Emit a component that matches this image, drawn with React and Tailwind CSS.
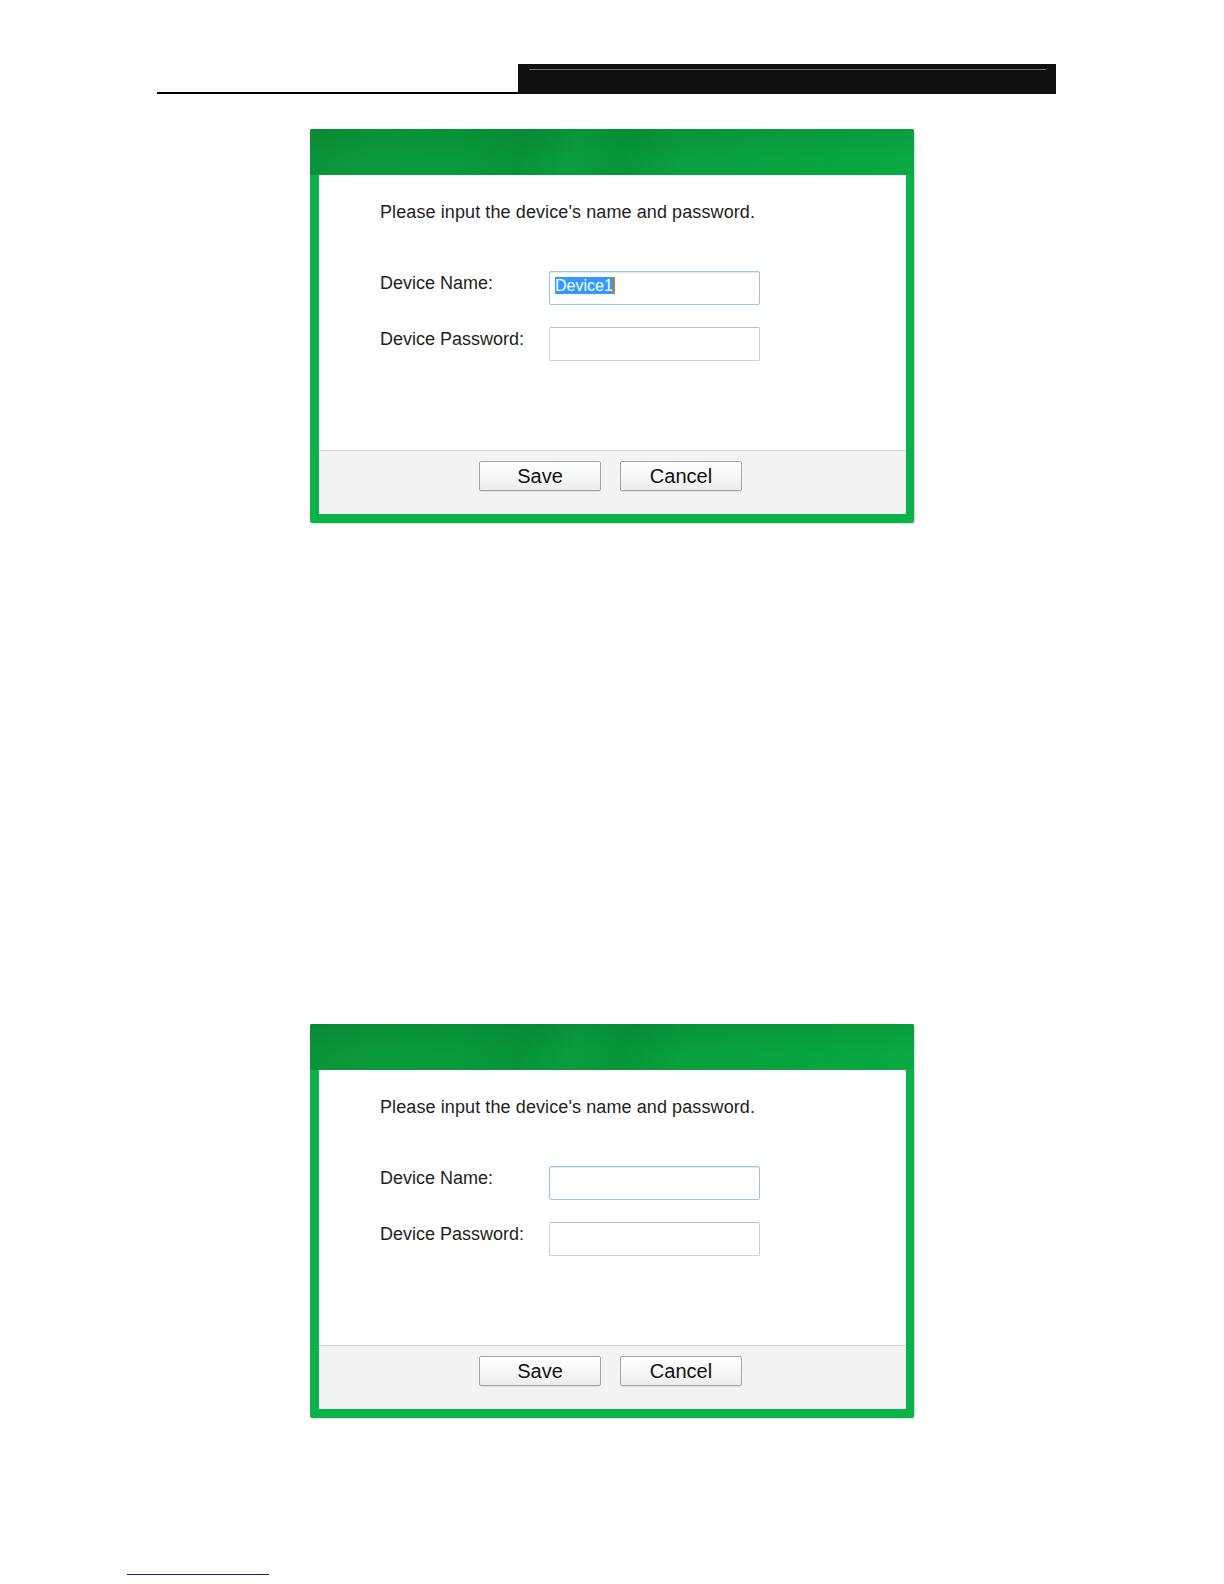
import React from "react";

function Field({ label, focused, value }) {
  return (
    <div className="flex items-start">
      <div className="w-[169px] pt-[1px] text-[18px] leading-[22px] text-[#1e1e1e]">{label}</div>
      <div
        className={
          "w-[211px] h-[34px] rounded-[2px] bg-white flex items-start pt-[5px] pl-[5px] " +
          (focused
            ? "border border-[#9cc2e6] shadow-[inset_0_1px_1px_rgba(120,160,200,0.25)]"
            : "border border-[#d0d0d0] border-t-[#bdbdbd]")
        }
      >
        {value ? (
          <>
            <span className="bg-[#3399ff] text-white text-[16px] leading-[17px] h-[17px]">{value}</span>
            <span className="w-[2px] h-[17px] bg-[#cc7a1a]" />
          </>
        ) : null}
      </div>
    </div>
  );
}

function Btn({ children }) {
  return (
    <div className="w-[122px] h-[30px] border border-[#a5a5a5] rounded-[2px] bg-[linear-gradient(#ffffff,#f7f7f7_50%,#ececec)] flex items-center justify-center text-[20px] leading-none text-[#111] shadow-[0_1px_0_rgba(0,0,0,0.08)]">
      {children}
    </div>
  );
}

function Dialog({ withValue }) {
  return (
    <div className="ml-[310px] w-[604px] h-[394px] flex flex-col rounded-[2px] bg-[#0cb34a] shadow-[1px_1px_1px_rgba(0,0,0,0.15)]">
      <div className="h-[46px] rounded-t-[2px] bg-[linear-gradient(rgba(0,60,20,0.10),rgba(0,60,20,0)_60%),linear-gradient(110deg,#0a9238_0%,#0b9a3b_12%,#089a3b_25%,#07933a_36%,#0a9d3e_44%,#079538_52%,#0a9f3f_62%,#09a240_75%,#07a640_88%,#0aa944_100%)]" />
      <div className="flex-1 flex flex-col pl-[9px] pr-[8px] pb-[9px]">
        <div className="h-[275px] bg-white pl-[61px] pt-[26px]">
          <div className="text-[18px] leading-[22px] tracking-[0.1px] text-[#1e1e1e]">
            Please input the device's name and password.
          </div>
          <div className="mt-[48px] flex flex-col gap-[22px]">
            <Field label="Device Name:" focused value={withValue ? "Device1" : null} />
            <Field label="Device Password:" />
          </div>
        </div>
        <div className="flex-1 border-t border-[#d6d6d6] bg-[#f3f3f3] flex justify-center gap-[19px] pt-[10px] pr-[4px]">
          <Btn>Save</Btn>
          <Btn>Cancel</Btn>
        </div>
      </div>
    </div>
  );
}

export default function App() {
  return (
    <div className="w-[1224px] h-[1584px] bg-white pt-[64px] font-['Liberation_Sans',Arial,sans-serif] overflow-hidden">
      <div className="ml-[157px] flex items-end">
        <div className="w-[361px] h-[2px] bg-black" />
        <div className="w-[538px] h-[30px] bg-[#0f0f0f] pt-[5px] pl-[11px] pr-[10px]">
          <div className="h-[1px] bg-[#707070]" />
        </div>
      </div>
      <div className="mt-[35px]">
        <Dialog withValue />
      </div>
      <div className="mt-[501px]">
        <Dialog />
      </div>
      <div className="mt-[156px] ml-[127px] w-[142px] h-[1px] bg-[#1c1c8a]" />
    </div>
  );
}
